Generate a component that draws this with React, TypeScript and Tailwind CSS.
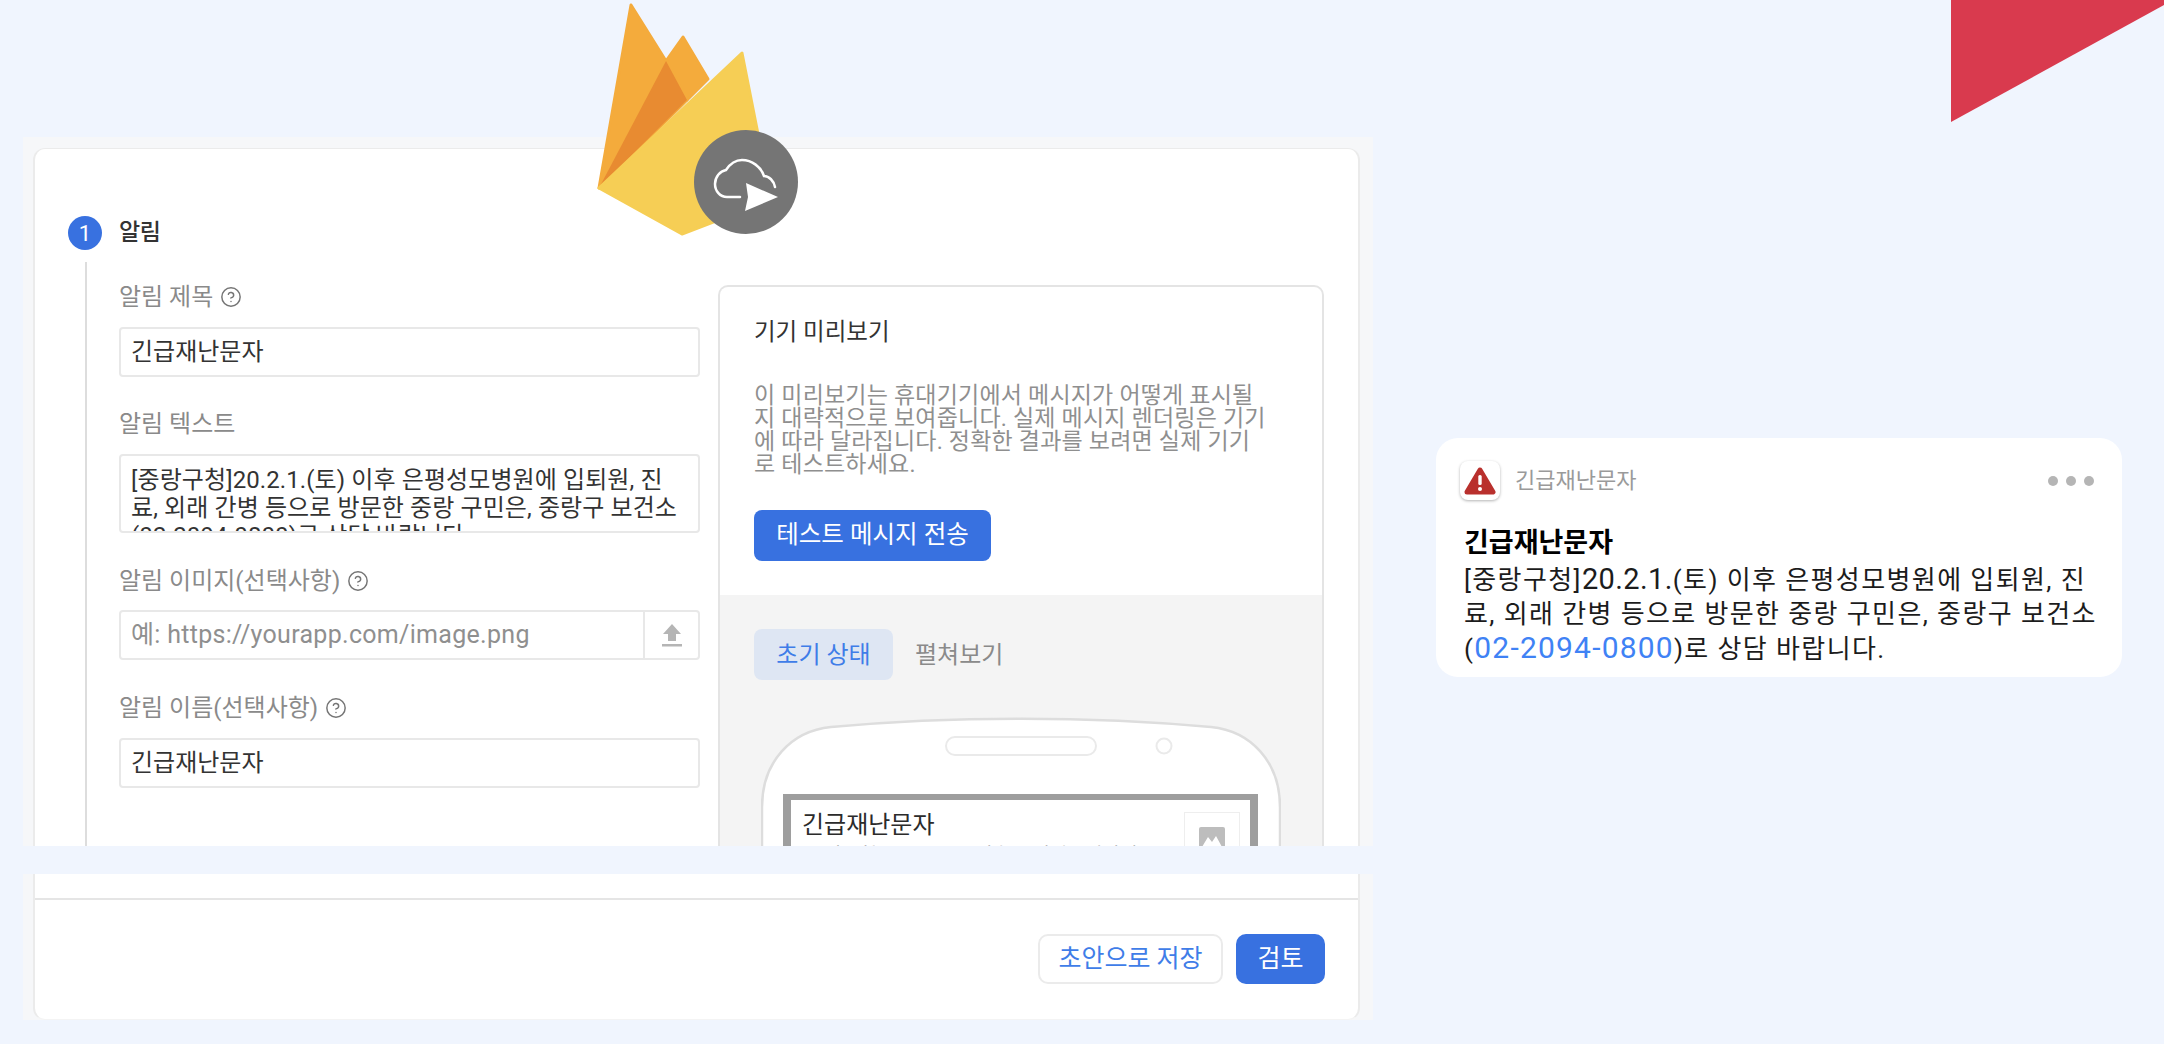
import { CircleHelp } from 'lucide-react';

const TITLE = '긴급재난문자';

function Label({ text, help = true }: { text: string; help?: boolean }) {
  return (
    <div className="flex h-[28px] items-center gap-[7px] text-[24px] text-[#8a8a8a]">
      <span>{text}</span>
      {help && <CircleHelp size={22} strokeWidth={1.6} className="text-[#757575]" />}
    </div>
  );
}

function TextBox({ value }: { value: string }) {
  return (
    <div className="flex h-[50px] items-center rounded-[4px] border-2 border-[#e8e8e8] bg-white pl-[10px] text-[24px] text-[#333333]">
      {value}
    </div>
  );
}

// 파이어베이스 로고 + 클라우드 메시징 배지
function FirebaseLogo() {
  return (
    <svg className="absolute left-[590px] top-0" width="220" height="240" viewBox="0 0 220 240">
      <path d="M9 188 L41 5 L76 61 L97 100 Z" fill="#f4ab3c" stroke="#f4ab3c" strokeWidth="3" strokeLinejoin="round" />
      <path d="M76 61 L93 37 L118 79 L97 100 Z" fill="#f4ab3c" stroke="#f4ab3c" strokeWidth="3" strokeLinejoin="round" />
      <path d="M9 188 L76 61 L97 100 Z" fill="#e88b31" />
      <path d="M9 188 L152 53 L181 200 L92 234 Z" fill="#f6ce55" stroke="#f6ce55" strokeWidth="3" strokeLinejoin="round" />
      <circle cx="156" cy="182" r="52" fill="#757575" />
      <path
        d="M150 197 H137 C130 197 125 191 125 184 C125 177 130 171 136 170 C140 164 145 160 152 160 C162 160 171 167 174 176 C179 176 184 181 185 187"
        fill="none"
        stroke="#ffffff"
        strokeWidth="2.5"
        strokeLinecap="round"
      />
      <path d="M156 183 L188 197 L155 211 L158 197 Z" fill="#ffffff" />
    </svg>
  );
}

function UploadIcon() {
  return (
    <svg width="20" height="24" viewBox="0 0 20 24">
      <path d="M10 1 L19 11 H14 V18 H6 V11 H1 Z" fill="#b5b5b5" />
      <rect x="0" y="21" width="20" height="2.5" fill="#b5b5b5" />
    </svg>
  );
}

function PhoneOutline() {
  return (
    <svg className="absolute left-0 top-0" width="520" height="140" viewBox="0 0 520 140">
      <path
        d="M1 140 V90 C1 45 30 14 70 10 C190 -1 330 -1 450 10 C490 14 519 45 519 90 V140"
        transform="translate(0 2)"
        fill="#ffffff"
        stroke="#dddddd"
        strokeWidth="2.5"
      />
      <rect x="185" y="22" width="150" height="18" rx="9" fill="#ffffff" stroke="#eaeaea" strokeWidth="2" />
      <circle cx="403" cy="31" r="7.5" fill="#ffffff" stroke="#eaeaea" strokeWidth="2" />
    </svg>
  );
}

function AlertIcon() {
  return (
    <div className="flex h-[39px] w-[40px] items-center justify-center rounded-[8px] bg-white shadow-[0_1px_3px_rgba(0,0,0,0.3)]">
      <svg width="32" height="28" viewBox="0 0 32 28">
        <path d="M16 3 L29 25 H3 Z" fill="#b9302d" stroke="#b9302d" strokeWidth="5" strokeLinejoin="round" />
        <rect x="14.3" y="8" width="3.4" height="10" rx="1.5" fill="#ffffff" />
        <circle cx="16" cy="22" r="2" fill="#ffffff" />
      </svg>
    </div>
  );
}

export default function App() {
  return (
    <div className="relative h-[1044px] w-full overflow-hidden bg-[#f0f5fe] font-['Roboto','Noto_Sans_CJK_KR',sans-serif]">
      <svg className="absolute right-0 top-0" width="213" height="122" viewBox="0 0 213 122">
        <polygon points="0,0 213,0 213,5 0,122" fill="#d93a4e" />
      </svg>

      <div className="flex items-start">
        {/* 왼쪽: 콘솔 화면 */}
        <div className="ml-[23px] mt-[137px] flex w-[1350px] flex-col gap-[28px]">
          <div className="h-[709px] overflow-hidden bg-[#f6f7f9] pl-[10px] pr-[13px] pt-[11px]">
            <div className="h-full rounded-t-[12px] border-x-2 border-t border-[#ebebeb] bg-white pt-[67px]">
              <div className="flex h-[34px] items-center pl-[33px]">
                <div className="flex h-[34px] w-[34px] items-center justify-center rounded-full bg-[#3871e0] text-[22px] text-white">
                  1
                </div>
                <span className="ml-[17px] text-[23px] font-medium tracking-[-0.3px] text-[#333333]">알림</span>
              </div>

              <div className="ml-[50px] mt-[12px] flex h-[600px] border-l-2 border-[#dddddd] pl-[32px]">
                <div className="w-[581px] pt-[21px]">
                  <Label text="알림 제목" />
                  <div className="mt-[16px]">
                    <TextBox value={TITLE} />
                  </div>

                  <div className="mt-[33px]">
                    <Label text="알림 텍스트" help={false} />
                  </div>
                  <div className="mt-[16px] h-[79px] overflow-hidden rounded-[4px] border-2 border-[#e8e8e8] pl-[10px] pt-[10px] text-[24px] leading-[28px] tracking-[0.1px] whitespace-nowrap text-[#333333]">
                    <div>[중랑구청]20.2.1.(토) 이후 은평성모병원에 입퇴원, 진</div>
                    <div>료, 외래 간병 등으로 방문한 중랑 구민은, 중랑구 보건소</div>
                    <div>(02-2094-0800)로 상담 바랍니다.</div>
                  </div>

                  <div className="mt-[34px]">
                    <Label text="알림 이미지(선택사항)" />
                  </div>
                  <div className="mt-[15px] flex h-[50px] items-stretch rounded-[4px] border-2 border-[#e8e8e8]">
                    <div className="flex flex-1 items-center pl-[10px] text-[25px] tracking-[0.3px] text-[#8f8f8f]">
                      예: https://yourapp.com/image.png
                    </div>
                    <div className="flex w-[55px] items-center justify-center border-l-2 border-[#e8e8e8]">
                      <UploadIcon />
                    </div>
                  </div>

                  <div className="mt-[34px]">
                    <Label text="알림 이름(선택사항)" />
                  </div>
                  <div className="mt-[16px]">
                    <TextBox value={TITLE} />
                  </div>
                </div>

                <div className="ml-[18px] mt-[23px] h-[600px] w-[606px] rounded-t-[10px] border-x-2 border-t-2 border-[#e4e4e4]">
                  <div className="px-[34px] pb-[34px] pt-[32px]">
                    <div className="flex h-[28px] items-center text-[23.5px] text-[#333333]">기기 미리보기</div>
                    <div className="mt-[37px] text-[23px] leading-[23px] tracking-[0.2px] whitespace-nowrap text-[#8f8f8f]">
                      <div>이 미리보기는 휴대기기에서 메시지가 어떻게 표시될</div>
                      <div>지 대략적으로 보여줍니다. 실제 메시지 렌더링은 기기</div>
                      <div>에 따라 달라집니다. 정확한 결과를 보려면 실제 기기</div>
                      <div>로 테스트하세요.</div>
                    </div>
                    <button className="mt-[34px] flex h-[51px] w-[237px] items-center justify-center rounded-[8px] bg-[#3871e0] text-[24.5px] text-white">
                      테스트 메시지 전송
                    </button>
                  </div>

                  <div className="h-[300px] bg-[#f4f4f4] pt-[34px]">
                    <div className="flex items-center pl-[34px]">
                      <div className="flex h-[51px] w-[139px] items-center justify-center rounded-[8px] bg-[#dee6f3] text-[24px] text-[#3f7de8]">
                        초기 상태
                      </div>
                      <div className="ml-[22px] text-[24px] text-[#8a8a8a]">펼쳐보기</div>
                    </div>

                    <div className="relative ml-[41px] mt-[35px] h-[200px] w-[520px]">
                      <PhoneOutline />
                      <div className="absolute left-[22px] top-[79px] h-[100px] w-[475px] border-x-[8px] border-t-[6px] border-[#9e9e9e] bg-white">
                        <div className="flex justify-between pl-[11px] pr-[10px]">
                          <div className="pt-[10px]">
                            <div className="flex h-[30px] items-center text-[24px] text-[#2b2b2b]">{TITLE}</div>
                            <div className="mt-[4px] text-[19px] leading-[24px] text-[#777777]">[중랑구청]20.2.1.(토) 이후 은평성모병원에</div>
                          </div>
                          <div className="mt-[12px] flex h-[56px] w-[56px] items-start justify-center border border-[#eeeeee] pt-[14px]">
                            <svg width="26" height="24" viewBox="0 0 26 24">
                              <rect width="26" height="24" rx="2" fill="#bdbdbd" />
                              <path d="M3 20 L9 10 L13 15 L17 9 L23 20 Z" fill="#ffffff" />
                            </svg>
                          </div>
                        </div>
                      </div>
                    </div>
                  </div>
                </div>
              </div>
            </div>
          </div>

          <div className="h-[146px] bg-[#f6f7f9] pl-[10px] pr-[13px]">
            <div className="h-full rounded-b-[12px] border-x-2 border-b border-[#ebebeb] border-b-[#f4f4f4] bg-white pt-[24px]">
              <div className="border-t-2 border-[#e5e5e5] pr-[33px] pt-[34px]">
                <div className="flex justify-end gap-[13px]">
                  <button className="h-[50px] w-[185px] rounded-[10px] border-2 border-[#ebebeb] bg-white text-[25px] text-[#3f7de8]">
                    초안으로 저장
                  </button>
                  <button className="h-[50px] w-[89px] rounded-[10px] bg-[#3871e0] text-[25px] text-white">검토</button>
                </div>
              </div>
            </div>
          </div>
        </div>

        {/* 오른쪽: 수신 화면 */}
        <div className="ml-[63px] mt-[438px] h-[239px] w-[686px] rounded-[22px] bg-white px-[24px] pt-[23px]">
          <div className="flex items-center">
            <AlertIcon />
            <span className="ml-[15px] text-[22px] text-[#9a9a9a]">{TITLE}</span>
            <div className="ml-auto flex gap-[8px] pr-[4px]">
              <span className="h-[10px] w-[10px] rounded-full bg-[#b5b5b5]" />
              <span className="h-[10px] w-[10px] rounded-full bg-[#b5b5b5]" />
              <span className="h-[10px] w-[10px] rounded-full bg-[#b5b5b5]" />
            </div>
          </div>
          <div className="ml-[4px] mt-[26px] whitespace-nowrap text-[26px] leading-[34px] tracking-[1.4px] text-[#1c1c1c]">
            <div className="text-[27px] font-bold tracking-normal text-black">{TITLE}</div>
            <div className="mt-[2px]">
              [중랑구청]<span className="text-[29px] tracking-[0.4px]">20.2.1.</span>(토) 이후 은평성모병원에 입퇴원, 진
            </div>
            <div>료, 외래 간병 등으로 방문한 중랑 구민은, 중랑구 보건소</div>
            <div>
              (<span className="text-[30px] tracking-[1.2px] text-[#3f82f5]">02-2094-0800</span>)로 상담 바랍니다.
            </div>
          </div>
        </div>
      </div>

      <FirebaseLogo />
    </div>
  );
}
